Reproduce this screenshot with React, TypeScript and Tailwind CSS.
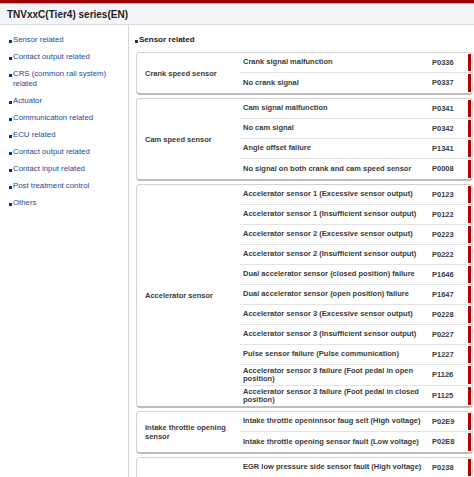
import React from 'react'

type Row = [string, string]
type Group = { label: string; rows: Row[] }

const nav = [
  'Sensor related',
  'Contact output related',
  'CRS (common rail system) related',
  'Actuator',
  'Communication related',
  'ECU related',
  'Contact output related',
  'Contact input related',
  'Post treatment control',
  'Others',
]

const groups: Group[] = [
  {
    label: 'Crank speed sensor',
    rows: [
      ['Crank signal malfunction', 'P0336'],
      ['No crank signal', 'P0337'],
    ],
  },
  {
    label: 'Cam speed sensor',
    rows: [
      ['Cam signal malfunction', 'P0341'],
      ['No cam signal', 'P0342'],
      ['Angle offset failure', 'P1341'],
      ['No signal on both crank and cam speed sensor', 'P0008'],
    ],
  },
  {
    label: 'Accelerator sensor',
    rows: [
      ['Accelerator sensor 1 (Excessive sensor output)', 'P0123'],
      ['Accelerator sensor 1 (Insufficient sensor output)', 'P0122'],
      ['Accelerator sensor 2 (Excessive sensor output)', 'P0223'],
      ['Accelerator sensor 2 (Insufficient sensor output)', 'P0222'],
      ['Dual accelerator sensor (closed position) failure', 'P1646'],
      ['Dual accelerator sensor (open position) failure', 'P1647'],
      ['Accelerator sensor 3 (Excessive sensor output)', 'P0228'],
      ['Accelerator sensor 3 (Insufficient sensor output)', 'P0227'],
      ['Pulse sensor failure (Pulse communication)', 'P1227'],
      ['Accelerator sensor 3 failure (Foot pedal in open position)', 'P1126'],
      ['Accelerator sensor 3 failure (Foot pedal in closed position)', 'P1125'],
    ],
  },
  {
    label: 'Intake throttle opening sensor',
    rows: [
      ['Intake throttle openinnsor faug selt (High voltage)', 'P02E9'],
      ['Intake throttle opening sensor fault (Low voltage)', 'P02E8'],
    ],
  },
  {
    label: 'EGR pressure sensor',
    rows: [
      ['EGR low pressure side sensor fault (High voltage)', 'P0238'],
      ['EGR low pressure side sensor fault (Low voltage)', 'P0237'],
      ['EGR high pressure side sensor fault (High voltage)', 'P0473'],
      ['EGR high pressure side sensor fault (Low voltage)', 'P0472'],
    ],
  },
]

export default function App() {
  return (
    <div className="h-[477px] overflow-hidden bg-white font-['Liberation_Sans',Arial,sans-serif] text-[#333]">
      {/* red strip */}
      <div className="h-[3px] bg-[#9e0000]" />
      <div className="h-px bg-[#e7a3a3]" />

      <header className="h-[21px] flex items-center pl-[7px] bg-[#f3f5f8] border-b border-[#dcdcdc]">
        <span className="text-[10px] font-bold text-[#222]">TNVxxC(Tier4) series(EN)</span>
      </header>

      <div className="flex h-full">
        <aside className="w-[129px] shrink-0 border-r border-[#d6d6d6] pt-[10px] pl-[9px] pr-2">
          <ul className="flex flex-col gap-[7px]">
            {nav.map((n, i) => (
              <li key={i} className="flex text-[7.8px] leading-[10px] text-[#2b4796]">
                <span className="w-[4px] shrink-0 pt-[5px]">
                  <span className="block w-[3px] h-[3px] bg-[#1b2f78]" />
                </span>
                <span>{n}</span>
              </li>
            ))}
          </ul>
        </aside>

        <main className="flex-1 pt-[10px] pl-[6px] pr-px">
          <h2 className="text-[8px] leading-[10px] font-bold text-[#222] mb-[7px] flex">
            <span className="w-[4px] shrink-0 pt-[5px]">
              <span className="block w-[3px] h-[3px] bg-[#333]" />
            </span>
            Sensor related
          </h2>

          <div className="flex flex-col gap-[3px] pl-px">
            {groups.map((g) => (
              <div
                key={g.label}
                className="flex rounded-[4px] border border-[#d2d2d2] border-b-2 border-b-[#bcbcbc] bg-white"
              >
                <div className="w-[103px] shrink-0 flex items-center pl-[8px] pr-[12px] text-[7.5px] leading-[9px] font-bold text-[#3a3a3a]">
                  {g.label}
                </div>
                <div className="flex-1 flex flex-col">
                  {g.rows.map(([d, c], i) => (
                    <div
                      key={c + i}
                      className="flex min-h-[20px] border-b border-[#e3e3e3] last:border-b-0"
                    >
                      <div className="flex-1 flex items-center pl-[3px] pr-[6px] py-[1.5px] text-[7.5px] leading-[8.5px] font-bold text-[#3a3a3a]">
                        {d}
                      </div>
                      <div className="w-[36px] shrink-0 flex items-center text-[7.5px] font-bold text-[#3a3a3a]">
                        {c}
                      </div>
                      <div className="w-[3px] shrink-0 bg-[#b10000] my-[1px] mr-px" />
                    </div>
                  ))}
                </div>
              </div>
            ))}
          </div>
        </main>
      </div>
    </div>
  )
}
